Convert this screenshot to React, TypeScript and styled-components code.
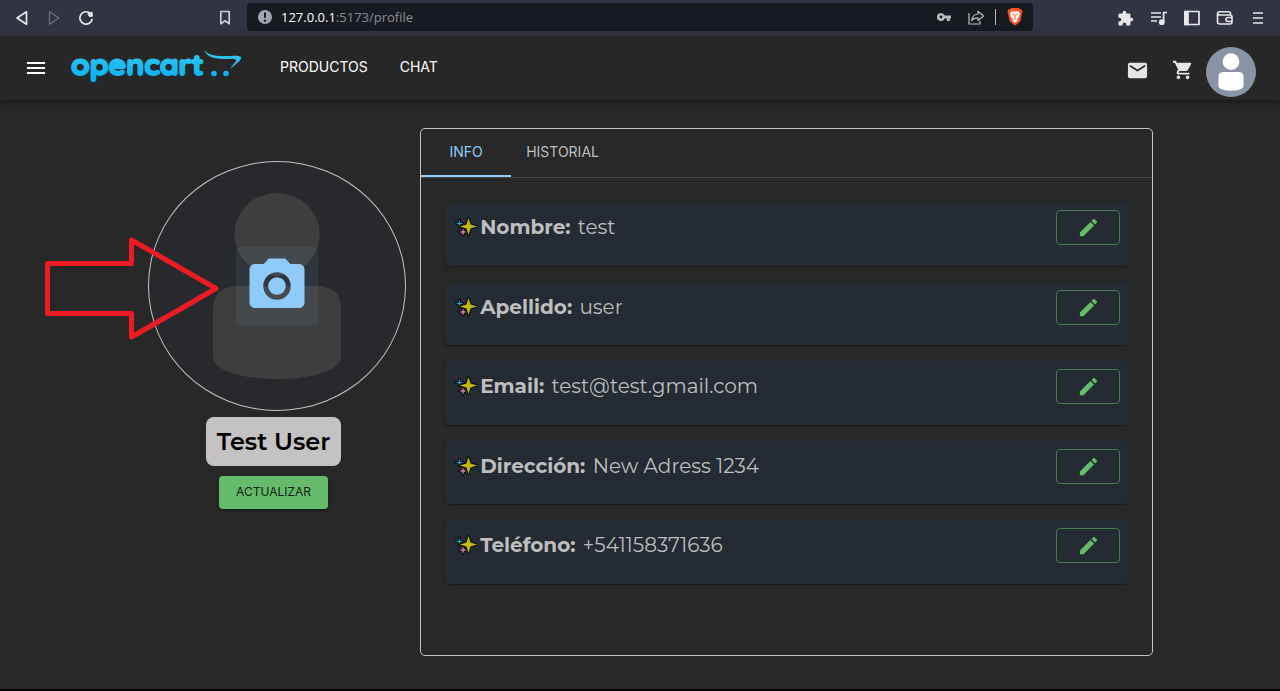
import React from "react";
import styled, { createGlobalStyle } from "styled-components";
import {
  MdEdit,
  MdExtension,
  MdMail,
  MdMenu,
  MdPhotoCamera,
  MdShoppingCart,
} from "react-icons/md";

const GlobalStyle = createGlobalStyle`
  *, *::before, *::after { box-sizing: border-box; }
  body {
    margin: 0;
    background: #282828;
    color: #fff;
    font-family: Roboto, "Liberation Sans", sans-serif;
  }
  button { font: inherit; color: inherit; cursor: pointer; }
`;

const Page = styled.div`
  display: flex;
  flex-direction: column;
  min-height: 100vh;
  border-bottom: 2px solid #000;
`;

/* Browser bar */

const BrowserBar = styled.div`
  display: flex;
  align-items: center;
  height: 36px;
  padding: 0 6px;
  background: #323443;
`;

const BarSide = styled.div<{ $end?: boolean }>`
  display: flex;
  align-items: center;
  width: 241px;
  height: 34px;
  flex: none;
  justify-content: ${(p) => (p.$end ? "flex-end" : "flex-start")};
`;

const BarButton = styled.button<{ $dim?: boolean; $last?: boolean }>`
  display: grid;
  place-items: center;
  width: 32px;
  height: 32px;
  padding: 0;
  border: 0;
  background: none;
  color: ${(p) => (p.$dim ? "#6d6f7b" : "#e8e8ea")};
  margin: ${(p) => (p.$last ? "0 6px 0 auto" : "0")};
`;

const ToolButton = styled(BarButton)`
  width: 33px;
`;

const AddressBar = styled.div`
  display: flex;
  align-items: center;
  flex: 1;
  height: 28px;
  margin-bottom: 2px;
  padding: 0 2px 0 10px;
  border-radius: 4px;
  background: #181a21;
`;

const Address = styled.span`
  flex: 1;
  padding-left: 8px;
  color: #8b8d93;
  font: 13px/20px "Open Sans", sans-serif;
`;

const Host = styled.span`
  color: #fff;
`;

const AddressButton = styled(BarButton)`
  height: 28px;
  color: #b9babd;
`;

const AddressDivider = styled.span`
  width: 1px;
  height: 16px;
  margin: 0 3px;
  background: #b9babd;
`;

/* Store header */

const Header = styled.header`
  display: flex;
  align-items: center;
  height: 64px;
  padding: 0 24px 0 16px;
  background: #272727;
  box-shadow: 0 2px 4px -1px rgba(0, 0, 0, 0.2), 0 4px 5px rgba(0, 0, 0, 0.14),
    0 1px 10px rgba(0, 0, 0, 0.12);
`;

const IconButton = styled.button`
  display: grid;
  place-items: center;
  width: 40px;
  height: 40px;
  padding: 0;
  border: 0;
  background: none;
  color: #fff;
`;

const LogoLink = styled.a`
  display: block;
  height: 48px;
  margin-left: 12px;
`;

const Nav = styled.nav`
  display: flex;
  gap: 32px;
  margin-left: 38px;
  padding-bottom: 2px;
`;

const NavLink = styled.a`
  color: #fff;
  font: 14px/24px Inter, Roboto, sans-serif;
  text-decoration: none;
`;

const Actions = styled.div`
  display: flex;
  align-items: center;
  margin-left: auto;
  padding-top: 8px;
`;

const ActionButton = styled(IconButton)`
  width: 46px;
  padding-bottom: 4px;
  color: #e6e4e4;
`;

const AccountButton = styled(IconButton)`
  width: 50px;
  height: 50px;
  border-radius: 50%;
  background: #8993a4;
  overflow: hidden;
`;

/* Profile */

const Main = styled.main`
  display: grid;
  grid-template-columns: 2fr 5fr;
  align-items: start;
  flex: 1;
  padding: 28px 127px 32px;
`;

const Profile = styled.section`
  display: flex;
  flex-direction: column;
  align-items: center;
  padding-top: 33px;
`;

const Photo = styled.div`
  position: relative;
  display: grid;
  width: 258px;
  height: 250px;
  margin-left: 6px;
  place-items: center;
`;

const PhotoFrame = styled.div`
  grid-area: 1 / 1;
  width: 100%;
  height: 100%;
  border: 1px solid #c4c2c3;
  border-radius: 50%;
  background: #28292d;
  overflow: hidden;
`;

const PhotoButton = styled.button`
  grid-area: 1 / 1;
  z-index: 1;
  display: grid;
  padding: 6px 8px;
  border: 0;
  border-radius: 4px;
  background: rgba(144, 202, 249, 0.08);
  color: #90caf9;
`;

const Arrow = styled.svg`
  position: absolute;
  z-index: 2;
  left: -104px;
  top: 75px;
  pointer-events: none;
`;

const UserName = styled.h1`
  margin: 6px 0 10px;
  padding: 9px 11px 8px;
  border-radius: 8px;
  background: #c4c2c3;
  color: #000;
  font: 600 24px/32px Montserrat, Inter, sans-serif;
`;

const UpdateButton = styled.button`
  height: 33px;
  padding: 0 17px 1px;
  border: 0;
  border-radius: 4px;
  background: #66bb6a;
  color: rgba(0, 0, 0, 0.87);
  font: 12px/20px Inter, Roboto, sans-serif;
  box-shadow: 0 3px 1px -2px rgba(0, 0, 0, 0.2), 0 2px 2px rgba(0, 0, 0, 0.14),
    0 1px 5px rgba(0, 0, 0, 0.12);
`;

const Panel = styled.section`
  min-height: 528px;
  border: 1px solid #c4c2c3;
  border-radius: 5px;
`;

const Tabs = styled.div`
  display: flex;
  height: 49px;
  border-bottom: 1px solid #474747;
`;

const Tab = styled.button<{ $active?: boolean }>`
  min-width: 90px;
  height: 48px;
  padding: 0 15px;
  border: 0;
  border-bottom: 2px solid ${(p) => (p.$active ? "#90caf9" : "transparent")};
  background: none;
  color: ${(p) => (p.$active ? "#90caf9" : "#bebebe")};
  font: 14px/20px Inter, Roboto, sans-serif;
`;

const FieldList = styled.ul`
  display: grid;
  grid-auto-rows: 1fr;
  gap: 16px;
  height: 382px;
  margin: 24px;
  padding: 0;
  list-style: none;
`;

const Field = styled.li`
  display: flex;
  align-items: flex-start;
  justify-content: space-between;
  padding: 8px 8px 8px 10px;
  border-radius: 4px;
  background: #252b33;
  box-shadow: 0 2px 1px -1px rgba(0, 0, 0, 0.2), 0 1px 1px rgba(0, 0, 0, 0.14),
    0 1px 3px rgba(0, 0, 0, 0.12);
`;

const FieldText = styled.p`
  display: flex;
  align-items: center;
  margin: 0;
  color: #bebebe;
  font: 20px/34px Montserrat, Inter, sans-serif;
  white-space: pre;
`;

const FieldLabel = styled.strong`
  margin: 0 2px 0 3px;
  font-weight: 700;
`;

const EditButton = styled.button`
  display: grid;
  place-items: center;
  width: 64px;
  height: 35px;
  padding: 0;
  border: 1px solid #457b4e;
  border-radius: 4px;
  background: none;
  color: #66bb6a;
`;

const fields = [
  { label: "Nombre:", value: "test" },
  { label: "Apellido:", value: "user" },
  { label: "Email:", value: "test@test.gmail.com" },
  { label: "Dirección:", value: "New Adress 1234" },
  { label: "Teléfono:", value: "+541158371636" },
];

function Person({ color }: { color: string }) {
  return (
    <svg width="100%" height="100%" viewBox="0 0 256 256" preserveAspectRatio="none" fill={color} display="block">
      <circle cx="128" cy="74.7" r="42.7" />
      <path d="M85.3 128h85.4Q192 130 192 152v48c0 16-30 24-64 24s-64-8-64-24v-48q0-22 21.3-24z" />
    </svg>
  );
}

function Sparkles() {
  const star = (x: number, y: number, r: number, w: number) =>
    `M${x} ${y - r}L${x + w} ${y - w}L${x + r} ${y}L${x + w} ${y + w}L${x} ${y + r}L${x - w} ${y + w}L${x - r} ${y}L${x - w} ${y - w}Z`;
  return (
    <svg width="22" height="22" viewBox="0 0 22 22" stroke="#0c0f12" strokeWidth="2.2" strokeLinejoin="round" paintOrder="stroke" aria-hidden="true">
      <path d={star(4.5, 7.5, 3.8, 0.8)} fill="#21a5bd" />
      <path d={star(8, 16, 3.8, 1)} fill="#bd7b9b" />
      <path d={star(13.5, 10.5, 8.6, 2)} fill="#c5b80e" />
    </svg>
  );
}

function Logo() {
  return (
    <svg width="174" height="48" viewBox="0 -4 174 48" role="img" aria-label="opencart">
      <defs>
        <linearGradient id="logo" x1="0" y1="4" x2="0" y2="34" gradientUnits="userSpaceOnUse">
          <stop offset="0" stopColor="#35c5ee" />
          <stop offset="1" stopColor="#00b1f4" />
        </linearGradient>
      </defs>
      <g fill="url(#logo)">
        <text x="3" y="27" fontFamily="Quicksand, 'Varela Round', Nunito, Lato, sans-serif" fontWeight="700" fontSize="30" stroke="url(#logo)" strokeWidth="2" strokeLinejoin="round">
          opencart
        </text>
        <path d="M136 2c5 6 13 6 22 6 7 0 13-1 15 1 1 3-5 7-11 12 3-5 7-8 6-9-2-2-6-1-10-1-12 0-19-2-22-9z" />
        <circle cx="146" cy="25.5" r="2.8" />
        <circle cx="158" cy="25.5" r="2.8" />
      </g>
    </svg>
  );
}

const line = { fill: "none", stroke: "currentColor", strokeWidth: 1.7, strokeLinejoin: "round" as const };

export default function App() {
  return (
    <>
      <GlobalStyle />
      <Page>
        <BrowserBar>
          <BarSide>
            <BarButton aria-label="Back">
              <svg width="16" height="16" viewBox="0 0 16 16" {...line}><path d="M12.5 1.8v12.4L3 8z" /></svg>
            </BarButton>
            <BarButton aria-label="Forward" $dim>
              <svg width="16" height="16" viewBox="0 0 16 16" {...line} strokeWidth={1.3}><path d="M3.5 1.8v12.4L13 8z" /></svg>
            </BarButton>
            <BarButton aria-label="Reload">
              <svg width="16" height="16" viewBox="0 0 16 16" {...line}>
                <path d="M14.2 9A6.2 6.2 0 1 1 11.5 2.8" />
                <path d="M9.8 3.6 14 2l.4 4.3-3 .2z" fill="currentColor" strokeWidth="1" />
              </svg>
            </BarButton>
            <BarButton aria-label="Bookmark" $last>
              <svg width="16" height="16" viewBox="0 0 16 16" {...line} color="#cfd0d2"><path d="M3.8 1.5h8.4v12.3L8 10.8l-4.2 3z" /></svg>
            </BarButton>
          </BarSide>
          <AddressBar>
            <svg width="16" height="16" viewBox="0 0 16 16" aria-hidden="true">
              <circle cx="8" cy="8" r="7" fill="#a2a5ad" />
              <path d="M8 3.5v5.3" stroke="#181a21" strokeWidth="2" />
              <circle cx="8" cy="11.6" r="1.2" fill="#181a21" />
            </svg>
            <Address><Host>127.0.0.1</Host>:5173/profile</Address>
            <AddressButton aria-label="Passwords">
              <svg width="16" height="16" viewBox="0 0 16 16" fill="currentColor">
                <path fillRule="evenodd" d="M5 4a4 4 0 1 0 3.7 5.4h2.1V12h3V9.4H15V6.6H8.7A4 4 0 0 0 5 4zm0 2.6a1.4 1.4 0 1 1 0 2.8 1.4 1.4 0 0 1 0-2.8z" />
              </svg>
            </AddressButton>
            <AddressButton aria-label="Share">
              <svg width="18" height="18" viewBox="0 0 18 18" {...line} strokeWidth={1.2}>
                <path d="M2 5v11h11v-3" />
                <path d="M11 3.2 16.5 8 11 12.5V9.8c-3 0-5 .8-6.3 3C5 9 7 6.4 11 6z" />
              </svg>
            </AddressButton>
            <AddressDivider />
            <AddressButton aria-label="Brave Shields">
              <svg width="16" height="18" viewBox="0 0 16 18">
                <path d="M4 0h8l1.2 1.4 1.6.2.8 2-.7 1.8-1.4 7c-.3 1.6-3.5 3.6-5.5 5.2-2-1.6-5.2-3.6-5.5-5.2L1.1 5.4.4 3.6l.8-2 1.6-.2z" fill="#fb542b" />
                <path d="M5 3.2 8 3.5l3-.3 2 2.3-1.1 3.5-2.1 2.5 1.2 1-3 2.3-3-2.3 1.200-1L4.100 9 3 5.500z" fill="#fff" />
                <path d="m4.800 6 2 .8m4.400-.8-2 .8M8 6.500V10M6.700 10.500 8 11.300l1.300-.8" fill="none" stroke="#fb542b" strokeWidth="1" />
              </svg>
            </AddressButton>
          </AddressBar>
          <BarSide $end>
            <ToolButton aria-label="Extensions"><MdExtension size={17} /></ToolButton>
            <ToolButton aria-label="Playlist">
              <svg width="18" height="18" viewBox="0 0 18 18" {...line}>
                <path d="M1 4h10M1 8h10M1 12h6M13.600 13V3.500H17" />
                <circle cx="11.800" cy="13.200" r="2" fill="currentColor" />
              </svg>
            </ToolButton>
            <ToolButton aria-label="Sidebar">
              <svg width="16" height="16" viewBox="0 0 16 16" {...line}>
                <path d="M1 1.500h14v13H1z" /><path d="M1 1.500h3v13H1z" fill="currentColor" />
              </svg>
            </ToolButton>
            <ToolButton aria-label="Wallet">
              <svg width="18" height="16" viewBox="0 0 18 16" {...line} strokeWidth={1.600}>
                <path d="M14.500 5V3.500q0-1.800-2-1.800h-9Q1.500 1.700 1.500 4v7.500q0 2.500 2.500 2.500h10q2 0 2-2V7q0-2-2-2H4q-2.500 0-2.500-1.500" />
                <path d="M16 7.500h-4a2 2 0 0 0 0 4h4" />
              </svg>
            </ToolButton>
            <ToolButton aria-label="Browser menu">
              <svg width="12" height="16" viewBox="0 0 12 16" {...line}><path d="M1 3h10M1 8h10M1 13h10" /></svg>
            </ToolButton>
          </BarSide>
        </BrowserBar>

        <Header>
          <IconButton aria-label="Menu"><MdMenu size={24} /></IconButton>
          <LogoLink href="#home"><Logo /></LogoLink>
          <Nav>
            <NavLink href="#productos">PRODUCTOS</NavLink>
            <NavLink href="#chat">CHAT</NavLink>
          </Nav>
          <Actions>
            <ActionButton aria-label="Mensajes"><MdMail size={23} /></ActionButton>
            <ActionButton aria-label="Carrito"><MdShoppingCart size={22} /></ActionButton>
            <AccountButton aria-label="Cuenta"><Person color="#fff" /></AccountButton>
          </Actions>
        </Header>

        <Main>
          <Profile>
            <Photo>
              <PhotoFrame><Person color="#3e3e3e" /></PhotoFrame>
              <PhotoButton aria-label="Cambiar foto"><MdPhotoCamera size={66} /></PhotoButton>
              <Arrow width="176" height="106" viewBox="0 0 176 106" fill="none" stroke="#ed1c24" strokeWidth="5" strokeLinejoin="round" aria-hidden="true">
                <path d="M3.500 27.500h84V4L172 52.500 87.500 101V77.500h-84z" />
              </Arrow>
            </Photo>
            <UserName>Test User</UserName>
            <UpdateButton>ACTUALIZAR</UpdateButton>
          </Profile>

          <Panel>
            <Tabs role="tablist">
              <Tab role="tab" aria-selected="true" $active>INFO</Tab>
              <Tab role="tab" aria-selected="false">HISTORIAL</Tab>
            </Tabs>
            <FieldList>
              {fields.map((field) => (
                <Field key={field.label}>
                  <FieldText>
                    <Sparkles />
                    <FieldLabel>{field.label}</FieldLabel>
                    <span> {field.value}</span>
                  </FieldText>
                  <EditButton aria-label={`Editar ${field.label}`}><MdEdit size={23} /></EditButton>
                </Field>
              ))}
            </FieldList>
          </Panel>
        </Main>
      </Page>
    </>
  );
}
